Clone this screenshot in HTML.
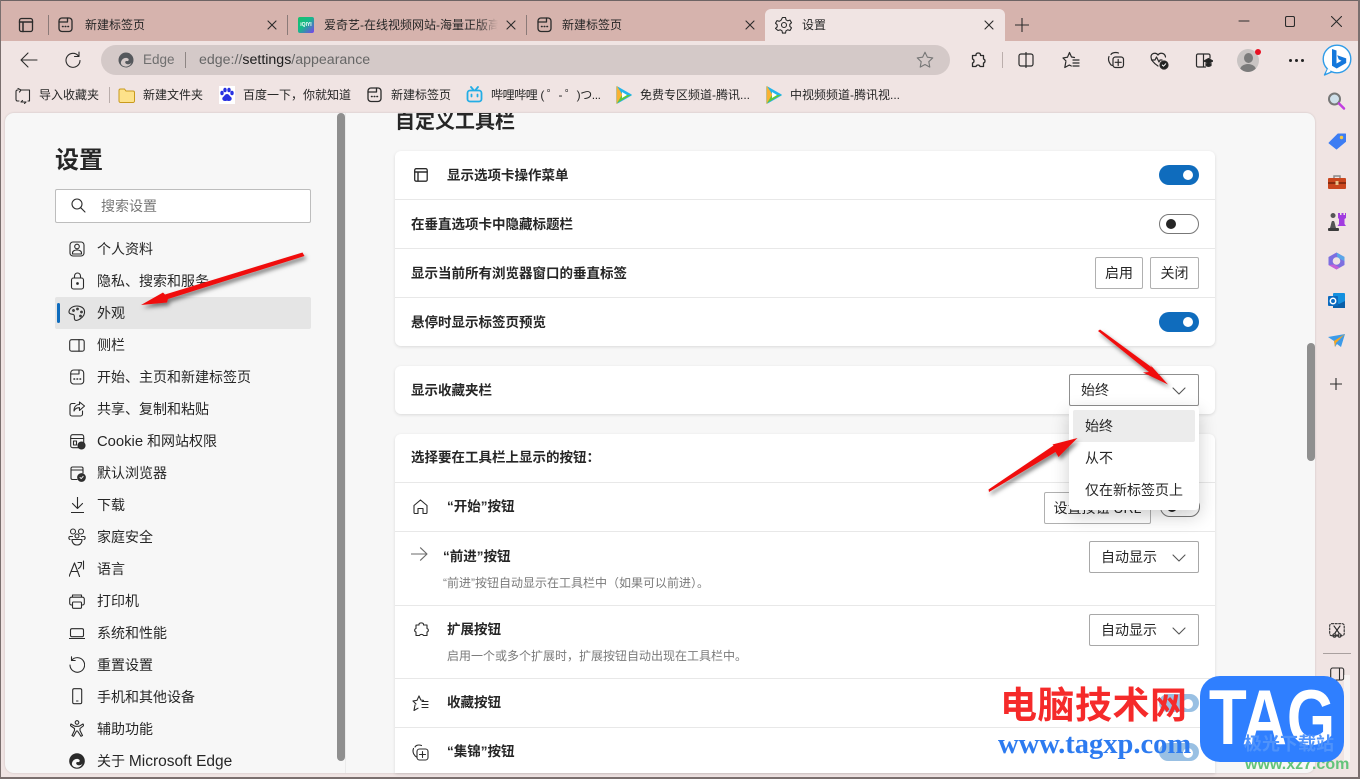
<!DOCTYPE html>
<html lang="zh-CN"><head><meta charset="utf-8"><title>设置</title>
<style>
*{box-sizing:border-box}
html,body{margin:0;padding:0;width:1360px;height:779px;overflow:hidden;background:#f0e4e3}
body{position:relative;font-family:"Liberation Sans","Noto Sans CJK SC",sans-serif;color:#262626;font-size:14px}
.a,.t,svg{position:absolute}
.t{white-space:nowrap;line-height:20px;height:20px}
.s{font-size:12px;line-height:16px;height:16px}
.b{font-weight:700;margin-top:1px}
svg.i{fill:none;stroke:#2b2b2b;stroke-width:1.1;stroke-linecap:round;stroke-linejoin:round}
.card{position:absolute;left:395px;width:820px;background:#fff;border-radius:6px;box-shadow:0 1px 3px rgba(0,0,0,.12)}
.ln{position:absolute;left:395px;width:820px;height:1px;background:#e8e8e8}
.btn{position:absolute;background:#fff;border:1px solid #b0b0b0;border-radius:2px;text-align:center;line-height:31px}
.sel{position:absolute;background:#fff;border:1px solid #a8a8a8;border-radius:2px;line-height:31px;padding-left:11px}
.sel svg{right:12px;top:12px}
.tog{position:absolute;width:40px;height:20px;border-radius:10px;background:#0f6cbd}
.tog:after{content:"";position:absolute;left:24px;top:5px;width:10px;height:10px;border-radius:50%;background:#fff}
.off{background:#fff;border:1px solid #777}
.off:after{left:6px;top:4px;background:#262626}
</style></head><body>
<!-- title bar -->
<div class="a" style="left:0;top:0;width:1360px;height:41px;background:#d6b3ad"></div>
<div class="a" style="left:0;top:0;width:1360px;height:1px;background:#6e6464"></div>
<div class="a" style="left:765px;top:9px;width:240px;height:32px;background:#f0e4e3;border-radius:6px 6px 0 0"></div>
<svg class="i" style="left:18px;top:17px;stroke-width:1.300" width="16" height="16"><rect x="1.500" y="1.500" width="13" height="13" rx="2"/><path d="M1.500 5h13M5 5v9.500" stroke-width="1.500"/></svg>
<div class="a" style="left:48px;top:15px;width:1px;height:20px;background:#8b7a78"></div>
<div class="a" style="left:287px;top:15px;width:1px;height:20px;background:#8b7a78"></div>
<div class="a" style="left:526px;top:15px;width:1px;height:20px;background:#8b7a78"></div>
<svg class="i" style="left:58px;top:17px;stroke-width:1.300" width="16" height="16"><rect x="1" y="1" width="13" height="13.500" rx="3"/><path d="M1 5h8.500V1"/><path d="M4.500 9.500h.6M7.200 9.500h.6M9.900 9.500h.6" stroke-width="1.500"/></svg>
<div class="t s" style="left:85px;top:17px">新建标签页</div>
<svg class="i" style="left:267px;top:20px" width="10" height="10"><path d="M1 1l8 8M9 1l-8 8"/></svg>
<div class="a" style="left:298px;top:17px;width:16px;height:16px;border-radius:2px;background:linear-gradient(135deg,#18c06a 0%,#16b98a 45%,#7a3ff0 100%);color:#fff;font-size:5px;font-weight:700;line-height:16px;text-align:center">iQIYI</div>
<div class="t s" style="left:324px;top:17px;width:174px;overflow:hidden;-webkit-mask-image:linear-gradient(90deg,#000 88%,transparent)">爱奇艺-在线视频网站-海量正版高清</div>
<svg class="i" style="left:506px;top:20px" width="10" height="10"><path d="M1 1l8 8M9 1l-8 8"/></svg>
<svg class="i" style="left:537px;top:17px;stroke-width:1.300" width="16" height="16"><rect x="1" y="1" width="13" height="13.500" rx="3"/><path d="M1 5h8.500V1"/><path d="M4.500 9.500h.6M7.200 9.500h.6M9.900 9.500h.6" stroke-width="1.500"/></svg>
<div class="t s" style="left:562px;top:17px">新建标签页</div>
<svg class="i" style="left:745px;top:20px" width="10" height="10"><path d="M1 1l8 8M9 1l-8 8"/></svg>
<svg class="i" style="left:775px;top:16px" width="18" height="18"><circle cx="9" cy="9" r="2.500"/><path d="M7.500 1.500h3l.5 2.300 1.700 1 2.300-.7 1.500 2.600-1.700 1.600v2l1.700 1.600-1.500 2.600-2.300-.7-1.700 1-.5 2.300h-3l-.5-2.300-1.700-1-2.300.7L.5 12.400l1.700-1.600v-2L.5 7.200 2 4.600l2.300.7 1.700-1z"/></svg>
<div class="t s" style="left:802px;top:17px">设置</div>
<svg class="i" style="left:984px;top:20px" width="10" height="10"><path d="M1 1l8 8M9 1l-8 8"/></svg>
<svg class="i" style="left:1015px;top:18px" width="14" height="14"><path d="M7 0v14M0 7h14"/></svg>
<svg class="i" style="left:1238px;top:16px" width="12" height="10"><path d="M1 5h10"/></svg>
<svg class="i" style="left:1285px;top:16px" width="10" height="11"><rect x=".5" y=".5" width="9" height="10" rx="1.500"/></svg>
<svg class="i" style="left:1331px;top:16px" width="11" height="11"><path d="M.5.5l10 10M10.500.5l-10 10"/></svg>
<!-- toolbar -->
<svg class="i" style="left:20px;top:51px" width="18" height="18"><path d="M17 9H1M8 2L1 9l7 7"/></svg>
<svg class="i" style="left:64px;top:51px" width="18" height="18"><path d="M14.500 5A7 7 0 1 0 16 9.500M15 1v4.500h-4.500"/></svg>
<div class="a" style="left:101px;top:45px;width:849px;height:30px;border-radius:15px;background:#d4c9c8"></div>
<svg style="left:118px;top:52px" width="16" height="16" viewBox="0 0 16 16"><circle cx="8" cy="8" r="7.500" fill="#55585c"/><path d="M3 10c1-4 5-5 7-3.500 1.500 1 .5 3-1.500 2.500-1.500 0-2 2 0 3 2 .8 4 0 5-1.500-1 3-4 4.500-6.500 4-3-.5-4.500-2.500-4-4.500z" fill="#d4c9c8"/></svg>
<div class="t" style="left:143px;top:50px;color:#6f6f6f;font-size:13.500px">Edge</div>
<div class="a" style="left:185px;top:52px;width:1px;height:16px;background:#8e8684"></div>
<div class="t" style="left:199px;top:50px;color:#666;font-size:14.200px">edge://<span style="color:#1c1c1c">settings</span>/appearance</div>
<svg class="i" style="left:916px;top:51px;stroke:#777" width="18" height="18"><path d="M9 1.200l2.400 5 5.400.7-4 3.800 1 5.400L9 13.500l-4.800 2.600 1-5.400-4-3.800 5.400-.7z"/></svg>
<svg class="i" style="left:970px;top:52px;stroke-width:1.300" width="17" height="17"><path d="M6 2.500C6.500.5 10 .5 10.500 2.500v1h3v3.500c2 .5 2 3.500 0 4v3.500H10c-.5-2-3.500-2-4 0H2.500V11c2-.5 2-3.500 0-4V3.500H6z"/></svg>
<div class="a" style="left:1002px;top:52px;width:1px;height:16px;background:#bbaeac"></div>
<svg class="i" style="left:1018px;top:52px;stroke-width:1.200" width="16" height="16"><rect x="1" y="2" width="14" height="12" rx="2"/><path d="M8 .5v15"/></svg>
<svg class="i" style="left:1062px;top:51px;stroke-width:1.200" width="18" height="18"><path d="M7.500 1.500l2 4.500 3 .5M1 7l4.500-.8M3.800 11L2.800 16.500l4.500-2.500 2 1M1 7l3 3M7.500 1.500L5.500 6.200"/><path d="M11 9h6M11 12h6M11 15h6"/></svg>
<svg class="i" style="left:1107px;top:51px;stroke-width:1.200" width="18" height="18"><path d="M4 3.500C5 1.500 9 1 11.500 2M2 5.500c-1 2-.500 5 1 7 .5 1 1.500 2 2.500 2"/><rect x="6" y="6" width="10.500" height="10.500" rx="2.500"/><path d="M11.200 8.500v6M8.200 11.300h6"/></svg>
<svg class="i" style="left:1150px;top:51px;stroke-width:1.200" width="19" height="19"><path d="M8 15C5 13 1 10 1 6c0-4 5-5 7-2 2-3 7-2 7.500 2M1.500 9H5l1.500-3L9 11l1-2h2"/><circle cx="14" cy="14" r="4" fill="#222"/><path d="M12.300 14l1.200 1.200 2.200-2.400" stroke="#fff" stroke-width="1"/></svg>
<svg class="i" style="left:1195px;top:51px;stroke-width:1.200" width="18" height="18"><path d="M8.500 3H3a1.500 1.500 0 0 0-1.500 1.500v10A1.500 1.500 0 0 0 3 16h5.500zM8.500 3h5A1.500 1.500 0 0 1 15 4.500V7M8.500 16h2"/><path d="M9 10l4.500-2.500L18 10l-4.500 2.500z" fill="#222"/><path d="M11 12.500v2c1.500 1 3.500 1 5 0v-2" fill="#222"/></svg>
<div class="a" style="left:1237px;top:49px;width:22px;height:23px;border-radius:50%;background:#c9c4c3;overflow:hidden"><div class="a" style="left:7px;top:4px;width:9px;height:10px;border-radius:50%;background:#7b7b7b"></div><div class="a" style="left:3px;top:15px;width:16px;height:12px;border-radius:50%;background:#7b7b7b"></div></div>
<div class="a" style="left:1255px;top:49px;width:6px;height:6px;border-radius:50%;background:#e81123"></div>
<div class="a" style="left:1289px;top:59px;width:3px;height:3px;border-radius:50%;background:#222;box-shadow:6px 0 #222,12px 0 #222"></div>
<!-- bing -->
<svg style="left:1322px;top:44px" width="30" height="33" viewBox="0 0 30 33"><path d="M6 24L2.500 31l8-3.500z" fill="#fff" stroke="#2f9ce8" stroke-width="1.400" stroke-linejoin="round"/><circle cx="15" cy="15" r="13.800" fill="#fff" stroke="#2f9ce8" stroke-width="1.400"/><path d="M6 24.500L4 29l5-2z" fill="#fff"/><path d="M10 5l4.500 1.500v13l5-2.800-2.800-1.300-1.500-4.200 9 3.200v4.600l-9.500 5.500-4.700-2.700z" fill="#1478dc"/></svg>
<!-- bookmarks -->
<svg class="i" style="left:15px;top:87px;stroke-width:1.100" width="16" height="17"><path d="M3 3h-.5A1.500 1.500 0 0 0 1 4.500v8A1.500 1.500 0 0 0 2.500 14H4M6 3h8.500v11H13M3 1.500L6 3 4.500 5M6 15h5M6 15l1.500-1.500M11 15l-1.500 1.500"/></svg>
<div class="t s" style="left:39px;top:87px">导入收藏夹</div>
<div class="a" style="left:109px;top:87px;width:1px;height:16px;background:#b9adab"></div>
<svg style="left:118px;top:87px" width="17" height="16"><path d="M1 3.500A1.500 1.500 0 0 1 2.500 2h4l1.500 2h7A1.500 1.500 0 0 1 16.500 5.500v8.500A1.500 1.500 0 0 1 15 15.500H2.500A1.500 1.500 0 0 1 1 14z" fill="#fde28a" stroke="#c99a1d"/></svg>
<div class="t s" style="left:143px;top:87px">新建文件夹</div>
<div class="a" style="left:219px;top:86px;width:16px;height:18px;background:#fff"></div>
<svg style="left:219px;top:87px" width="16" height="16" viewBox="0 0 16 16" fill="#2932e1"><ellipse cx="3" cy="6" rx="1.700" ry="2.300"/><ellipse cx="6" cy="3" rx="1.700" ry="2.300"/><ellipse cx="10" cy="3" rx="1.700" ry="2.300"/><ellipse cx="13" cy="6" rx="1.700" ry="2.300"/><path d="M8 7c-2 0-2.500 2-4 3-1.500 1.500-.5 4 2 4 1 0 1.500-.3 2-.3s1 .3 2 .3c2.500 0 3.500-2.500 2-4-1.500-1-2-3-4-3z"/></svg>
<div class="t s" style="left:243px;top:87px">百度一下，你就知道</div>
<svg class="i" style="left:367px;top:87px;stroke-width:1.300" width="16" height="16"><rect x="1" y="1" width="13" height="13.500" rx="3"/><path d="M1 5h8.500V1"/><path d="M4.500 9.500h.6M7.200 9.500h.6M9.900 9.500h.6" stroke-width="1.500"/></svg>
<div class="t s" style="left:391px;top:87px">新建标签页</div>
<svg class="i" style="left:466px;top:86px;stroke:#23ade5;stroke-width:1.800" width="17" height="17"><rect x="1.500" y="4.500" width="14" height="11" rx="2.500"/><path d="M5 1l2.500 3M12 1L9.500 4M5.500 8.500v2M11.500 8.500v2"/></svg>
<div class="t s" style="left:491px;top:87px;letter-spacing:-.4px">哔哩哔哩 ( ゜- ゜)つ...</div>
<svg style="left:615px;top:86px" width="17" height="18" viewBox="0 0 17 18"><path d="M2 1l14 8-14 8z" fill="#23b4ea" stroke="#23b4ea" stroke-width="1.500" stroke-linejoin="round"/><path d="M2 1l5 8-5 8z" fill="#f9b233" stroke="#f9b233"/><path d="M2 17l14-8-9 0z" fill="#5fc83c"/><path d="M7 6l5 3-5 3z" fill="#fff"/></svg>
<div class="t s" style="left:640px;top:87px">免费专区频道-腾讯...</div>
<svg style="left:765px;top:86px" width="17" height="18" viewBox="0 0 17 18"><path d="M2 1l14 8-14 8z" fill="#23b4ea" stroke="#23b4ea" stroke-width="1.500" stroke-linejoin="round"/><path d="M2 1l5 8-5 8z" fill="#f9b233" stroke="#f9b233"/><path d="M2 17l14-8-9 0z" fill="#5fc83c"/><path d="M7 6l5 3-5 3z" fill="#fff"/></svg>
<div class="t s" style="left:790px;top:87px">中视频频道-腾讯视...</div>
<!-- right sidebar -->
<svg style="left:1327px;top:91px" width="19" height="20"><circle cx="7.500" cy="8" r="5.500" fill="#cfe0ea" stroke="#777" stroke-width="2"/><path d="M12 12.500l5 5" stroke="#c23ee0" stroke-width="2.500" stroke-linecap="round"/></svg>
<svg style="left:1328px;top:132px" width="19" height="18"><path d="M1 11L10 2h7.500v7.500L8.500 17z" fill="#3d7df3" stroke="#3d7df3" stroke-linejoin="round"/><circle cx="13.500" cy="5.500" r="1.700" fill="#f5c842"/></svg>
<svg style="left:1328px;top:174px" width="18" height="16"><path d="M6 4V2h6v2" fill="none" stroke="#8a8a8a" stroke-width="1.500"/><rect x="0" y="4" width="18" height="11" rx="1" fill="#c9461e"/><rect x="0" y="8" width="18" height="2" fill="#8a2b0f"/><rect x="7.500" y="7" width="3" height="4" fill="#e9c18a"/></svg>
<svg style="left:1328px;top:212px" width="18" height="20"><path d="M5 6a2.500 2.500 0 1 1 .1 0M2 16c1-3 1-5 2-7h2c1 2 1 4 2 7z" fill="#555"/><rect x="0" y="16" width="11" height="3" rx="1" fill="#3c3c3c"/><path d="M10 1h2v2h1.500V1h2v2H17V1h1v5l-1.500 1v5l1.500 2H9.500l1.500-2V7L10 6z" fill="#a23ce0"/></svg>
<svg style="left:1328px;top:252px" width="17" height="18" viewBox="0 0 17 18"><path d="M8.500 .5L16.500 5v8l-8 4.500L.5 13V5z" fill="#7d6fe0"/><path d="M8.500 .5L16.500 5v4l-7-3z" fill="#5aa6e8"/><path d="M.5 13l8 4.500 3-2-5.500-3z" fill="#c562d8"/><circle cx="8.500" cy="9" r="3.800" fill="#f0e4e3"/></svg>
<svg style="left:1328px;top:292px" width="17" height="17"><rect x="5" y="1" width="12" height="15" rx="1" fill="#1490df"/><path d="M5 9l6 3 6-3v7H5z" fill="#0a5fa8"/><rect x="0" y="4" width="10" height="10" rx="1" fill="#0b6abf"/><circle cx="5" cy="9" r="2.700" fill="none" stroke="#fff" stroke-width="1.500"/></svg>
<svg style="left:1328px;top:334px" width="17" height="14"><path d="M0 3L17 0l-4 13-4-3-2 3-1-6z" fill="#3d9be9"/><path d="M0 3l6 4 11-7-9 9-1 4-1-6z" fill="#f5a623"/></svg>
<svg class="i" style="left:1330px;top:378px" width="12" height="12"><path d="M6 0v12M0 6h12"/></svg>
<svg class="i" style="left:1329px;top:623px" width="16" height="16"><rect x=".7" y=".7" width="14.500" height="12" rx="2" stroke-dasharray="2 1.500"/><path d="M5 3l5 7M11 3L6 10"/><circle cx="5.500" cy="12.500" r="1.700"/><circle cx="10.500" cy="12.500" r="1.700"/></svg>
<div class="a" style="left:1323px;top:653px;width:28px;height:1px;background:#a9a09f"></div>
<svg class="i" style="left:1330px;top:666px" width="15" height="15"><rect x=".7" y="2" width="13" height="12" rx="2"/><path d="M9.500 2v12"/></svg>
<!-- content -->
<div class="a" style="left:5px;top:113px;width:1310px;height:660px;background:#f7f7f7;border-radius:9px;overflow:hidden;box-shadow:0 0 2px rgba(0,0,0,.15)">
<div class="a b" style="left:390px;top:-5px;font-size:20px;line-height:26px;white-space:nowrap">自定义工具栏</div>
</div>
<div class="a" style="left:345px;top:113px;width:1px;height:660px;background:#ebebeb"></div>
<div class="a" style="left:337px;top:113px;width:8px;height:648px;border-radius:4px;background:#8f8f8f"></div>
<div class="a" style="left:1307px;top:343px;width:8px;height:118px;border-radius:4px;background:#8f8f8f"></div>
<div class="t b" style="left:55px;top:145px;font-size:24px;line-height:30px;height:30px">设置</div>
<div class="a" style="left:55px;top:189px;width:256px;height:34px;background:#fff;border:1px solid #bdbdbd;border-radius:2px"></div>
<svg class="i" style="left:71px;top:198px" width="15" height="15"><circle cx="6" cy="6" r="5"/><path d="M9.700 9.700l4.300 4.300"/></svg>
<div class="t" style="left:101px;top:196px;color:#777;font-size:14px">搜索设置</div>
<div class="a" style="left:55px;top:297px;width:256px;height:32px;background:#e5e5e5;border-radius:2px"></div>
<div class="a" style="left:57px;top:303px;width:3px;height:20px;background:#0f6cbd;border-radius:2px"></div>
<!-- nav -->
<svg class="i" style="left:69px;top:241px" width="16" height="16"><rect x="1" y="1" width="14" height="14" rx="3"/><circle cx="8" cy="5.500" r="2.300"/><path d="M3.500 12c0-4 9-4 9 0v1h-9z"/></svg>
<div class="t" style="left:97px;top:239px">个人资料</div>
<svg class="i" style="left:70px;top:272px" width="15" height="18"><rect x="1.500" y="6" width="12" height="11" rx="2"/><path d="M4.500 6V4a3 3 0 0 1 6 0v2"/><circle cx="7.500" cy="11.500" r=".8" fill="#222"/></svg>
<div class="t" style="left:97px;top:271px">隐私、搜索和服务</div>
<svg class="i" style="left:68px;top:304px" width="18" height="18"><path d="M9 2c-5 0-8 3-8 6 0 3 4 1.500 5 3 1 1.500-.5 3 1 5 1 1 3.500 0 5-1 3-2 5-5 4.500-8C16 4 13 2 9 2z"/><circle cx="5.500" cy="6.500" r=".8"/><circle cx="9.500" cy="5" r=".8"/><circle cx="13.500" cy="8" r=".8"/><circle cx="12.500" cy="12" r=".8"/></svg>
<div class="t" style="left:97px;top:303px">外观</div>
<svg class="i" style="left:69px;top:339px" width="16" height="13"><rect x=".7" y=".7" width="14.500" height="11.500" rx="2"/><path d="M10 .7v11.500"/></svg>
<div class="t" style="left:97px;top:335px">侧栏</div>
<svg class="i" style="left:70px;top:369px" width="15" height="16"><rect x=".7" y="1" width="13" height="14" rx="3"/><path d="M.7 5h8.300V1"/><path d="M4 10h.6M7 10h.6M10 10h.6" stroke-width="1.500"/></svg>
<div class="t" style="left:97px;top:367px">开始、主页和新建标签页</div>
<svg class="i" style="left:69px;top:401px" width="16" height="16"><path d="M6 2.500H3A2 2 0 0 0 1 4.500v8.500a2 2 0 0 0 2 2h8.500a2 2 0 0 0 2-2V10"/><path d="M15.500 5L10.500 1v2.500C7 3.500 5 6 5 10c1-2.500 3-3.300 5.500-3.300V9.500z"/></svg>
<div class="t" style="left:97px;top:399px">共享、复制和粘贴</div>
<svg class="i" style="left:70px;top:434px" width="16" height="16"><rect x=".7" y=".7" width="13" height="13" rx="2"/><path d="M.7 4.500h13M3.500 7v4h3V7z"/><circle cx="11.500" cy="11.500" r="3.500" fill="#333"/></svg>
<div class="t" style="left:97px;top:431px"><span style="font-size:14.800px">Cookie</span> 和网站权限</div>
<svg class="i" style="left:70px;top:466px" width="16" height="16"><path d="M7 13.500H2.500A1.500 1.500 0 0 1 1 12V2.500A1.500 1.500 0 0 1 2.500 1h9A1.500 1.500 0 0 1 13 2.500V7M1 4h12"/><circle cx="11.500" cy="11.500" r="3.800" fill="#333"/><path d="M10 11.500l1.200 1.100 1.900-2.200" stroke="#fff" stroke-width=".9"/></svg>
<div class="t" style="left:97px;top:463px">默认浏览器</div>
<svg class="i" style="left:71px;top:497px" width="13" height="16"><path d="M6.500 0v11.500M1.500 6.500l5 5 5-5M0 15.500h13"/></svg>
<div class="t" style="left:97px;top:495px">下载</div>
<svg class="i" style="left:68px;top:528px" width="18" height="18"><circle cx="5" cy="3.500" r="2.500"/><circle cx="13" cy="3.500" r="2.500"/><circle cx="9" cy="8" r="2"/><path d="M4.500 8.500H2C.5 8.500.5 11 2 11.500M13.500 8.500H16c1.500 0 1.500 2.500 0 3M4 11.500h10c0 3.500-2 5.500-5 5.500s-5-2-5-5.500z"/></svg>
<div class="t" style="left:97px;top:527px">家庭安全</div>
<svg class="i" style="left:69px;top:560px" width="16" height="17"><path d="M0 16.500L5.500 3l5 13.500M2 11.500h7M9 2.500h3.500c0 3-1 5-3 6M14.500 1v8"/></svg>
<div class="t" style="left:97px;top:559px">语言</div>
<svg class="i" style="left:69px;top:594px" width="16" height="15"><path d="M3.500 11H2.500A1.800 1.800 0 0 1 .7 9.200V5A1.800 1.800 0 0 1 2.500 3.200h11A1.800 1.800 0 0 1 15.300 5v4.200A1.800 1.800 0 0 1 13.500 11h-1M3.500 3V1h9v2"/><rect x="3.500" y="8" width="9" height="6.300" rx="1"/></svg>
<div class="t" style="left:97px;top:591px">打印机</div>
<svg class="i" style="left:69px;top:628px" width="16" height="11"><rect x="1.500" y=".7" width="13" height="8" rx="1.500"/><path d="M0 10.500h16"/></svg>
<div class="t" style="left:97px;top:623px">系统和性能</div>
<svg class="i" style="left:69px;top:656px" width="16" height="17"><path d="M2.500 4.500A7.300 7.300 0 1 1 1 9M2.500 .8v3.700h3.700"/></svg>
<div class="t" style="left:97px;top:655px">重置设置</div>
<svg class="i" style="left:72px;top:688px" width="11" height="17"><rect x=".7" y=".7" width="9" height="15" rx="1.500"/><path d="M4.500 13h1.500"/></svg>
<div class="t" style="left:97px;top:687px">手机和其他设备</div>
<svg class="i" style="left:70px;top:720px" width="14" height="17"><circle cx="7" cy="2.500" r="1.800"/><path d="M1 4l4 2.300h4L13 4l.8 1.500-3.800 3v2l2.500 5-1.500.8L7.500 11h-1l-3 5.300-1.500-.8 2.500-5v-2L.2 5.500z"/></svg>
<div class="t" style="left:97px;top:719px">辅助功能</div>
<svg style="left:69px;top:753px" width="16" height="16" viewBox="0 0 16 16"><circle cx="8" cy="8" r="7.800" fill="#2a2a2a"/><path d="M3 10c1-4 5-5 7-3.500 1.500 1 .5 3-1.500 2.500-1.500 0-2 2 0 3 2 .8 4 0 5-1.500-1 3-4 4.500-6.500 4-3-.5-4.500-2.500-4-4.500z" fill="#f7f7f7"/></svg>
<div class="t" style="left:97px;top:751px">关于 <span style="font-size:15.500px">Microsoft Edge</span></div>
<!-- cards -->
<div class="card" style="top:151px;height:195px"></div>
<div class="ln" style="top:199px"></div><div class="ln" style="top:248px"></div><div class="ln" style="top:297px"></div>
<svg class="i" style="left:414px;top:168px;stroke-width:1.300" width="14" height="14"><rect x=".7" y=".7" width="12.500" height="12.500" rx="1.500"/><path d="M.7 4h12.500M4 4v9" stroke-width="1.400"/></svg>
<div class="t b" style="left:447px;top:165px;font-size:13.500px">显示选项卡操作菜单</div>
<div class="tog" style="left:1159px;top:165px"></div>
<div class="t b" style="left:411px;top:214px;font-size:13.500px">在垂直选项卡中隐藏标题栏</div>
<div class="tog off" style="left:1159px;top:214px"></div>
<div class="t b" style="left:411px;top:263px;font-size:13.500px">显示当前所有浏览器窗口的垂直标签</div>
<div class="btn" style="left:1095px;top:257px;width:48px;height:32px">启用</div>
<div class="btn" style="left:1150px;top:257px;width:49px;height:32px">关闭</div>
<div class="t b" style="left:411px;top:312px;font-size:13.500px">悬停时显示标签页预览</div>
<div class="tog" style="left:1159px;top:312px"></div>
<div class="card" style="top:366px;height:48px"></div>
<div class="t b" style="left:411px;top:380px;font-size:13.500px">显示收藏夹栏</div>
<div class="sel" style="left:1069px;top:374px;width:130px;height:32px;border-color:#8f8f8f">始终<svg class="i" style="stroke:#555" width="14" height="8"><path d="M1 1l6 6 6-6"/></svg></div>
<div class="card" style="top:434px;border-radius:6px 6px 0 0;height:339px"></div>
<div class="ln" style="top:482px"></div><div class="ln" style="top:531px"></div><div class="ln" style="top:605px"></div><div class="ln" style="top:678px"></div><div class="ln" style="top:727px"></div>
<div class="t b" style="left:411px;top:447px;font-size:13.500px">选择要在工具栏上显示的按钮：</div>
<svg class="i" style="left:413px;top:499px;stroke-width:1.100" width="15" height="15"><path d="M1 13.500V6.500L7.500 1 14 6.500v7a1 1 0 0 1-1 1h-3V9.500H5v5H2a1 1 0 0 1-1-1z"/></svg>
<div class="t b" style="left:447px;top:496px;font-size:13.500px">“开始”按钮</div>
<div class="btn" style="left:1044px;top:492px;width:107px;height:32px">设置按钮 URL</div>
<div class="tog off" style="left:1160px;top:497px"></div>
<svg class="i" style="left:411px;top:547px;stroke:#6a6a6a" width="17" height="14"><path d="M0 7h16M9.500 .8L16 7l-6.500 6.200"/></svg>
<div class="t b" style="left:443px;top:546px;font-size:13.500px">“前进”按钮</div>
<div class="t s" style="left:443px;top:575px;color:#7a7a7a">“前进”按钮自动显示在工具栏中（如果可以前进）。</div>
<div class="sel" style="left:1089px;top:541px;width:110px;height:32px">自动显示<svg class="i" style="stroke:#555" width="14" height="8"><path d="M1 1l6 6 6-6"/></svg></div>
<svg class="i" style="left:414px;top:622px;stroke-width:1.100" width="15" height="16"><path d="M5 2C5.500.5 9 .5 9.500 2v1H13v3.500c1.800.5 1.800 3 0 3.500V13.500H9.500c-.5-1.500-3.500-1.500-4 0H2V10c-1.800-.5-1.800-3 0-3.500V3h3z"/></svg>
<div class="t b" style="left:447px;top:619px;font-size:13.500px">扩展按钮</div>
<div class="t s" style="left:447px;top:648px;color:#7a7a7a">启用一个或多个扩展时，扩展按钮自动出现在工具栏中。</div>
<div class="sel" style="left:1089px;top:614px;width:110px;height:32px">自动显示<svg class="i" style="stroke:#555" width="14" height="8"><path d="M1 1l6 6 6-6"/></svg></div>
<svg class="i" style="left:412px;top:695px" width="18" height="16"><path d="M7 1l1.800 4 2.700.4M1 6l4-.7L7 1M3 10l-1 5.500 4-2.300M1 6l3 3"/><path d="M10 6.500h6M10 9.500h6M10 12.500h6"/></svg>
<div class="t b" style="left:447px;top:692px;font-size:13.500px">收藏按钮</div>
<div class="tog" style="left:1159px;top:694px;opacity:.42;height:18px"></div>
<svg class="i" style="left:412px;top:744px" width="18" height="17"><path d="M3 3c1-2 4-2.500 6.500-1.500M1.500 4.500c-1 2-.5 5 1 6.500.5 1 1 1.500 2 2"/><rect x="5" y="5" width="11" height="11" rx="2.500"/><path d="M10.500 7.500v6M7.500 10.500h6"/></svg>
<div class="t b" style="left:447px;top:741px;font-size:13.500px">“集锦”按钮</div>
<div class="tog" style="left:1159px;top:743px;opacity:.42;height:18px"></div>
<!-- dropdown -->
<div class="a" style="left:1069px;top:406px;width:130px;height:104px;background:#fff;border-radius:4px;box-shadow:0 6px 18px rgba(0,0,0,.2)"></div>
<div class="a" style="left:1073px;top:410px;width:122px;height:32px;background:#ececec;border-radius:2px"></div>
<div class="t" style="left:1085px;top:416px">始终</div>
<div class="t" style="left:1085px;top:448px">从不</div>
<div class="t" style="left:1085px;top:480px">仅在新标签页上</div>
<!-- arrows -->
<svg style="left:0;top:0;overflow:visible" width="1360" height="779">
<defs><filter id="sh" x="-20%" y="-20%" width="140%" height="140%"><feDropShadow dx="2" dy="3" stdDeviation="2" flood-color="#000" flood-opacity=".5"/></filter></defs>
<g fill="#f01010" filter="url(#sh)">
<path d="M302.500 252.500L304.500 256 168 299 167 302.500 141 305 163 292.500 165 294.500z"/>
<path d="M1098 331l2-1.500 52 38-2-3 18 20-25-12 6-.5-51-41z"/>
<path d="M989 492l-.5-2.500 65-44-1-1 25-6.500-19 19-3-5z"/>
</g></svg>
<!-- bottom border -->
<div class="a" style="left:0;top:777px;width:1360px;height:2px;background:#7a6f6e"></div>
<div class="a" style="left:0;top:0;width:1px;height:779px;background:#7a6f6e"></div>
<div class="a" style="left:1358px;top:0;width:2px;height:779px;background:#7a6f6e"></div>
<!-- watermark -->
<div class="a" style="left:1344px;top:675px;width:6px;height:87px;background:rgba(255,255,255,.55)"></div>
<div class="t" style="left:1000px;top:680px;height:44px;line-height:44px;font-size:37px;font-weight:700;color:#f52a2a;letter-spacing:.500px;font-family:'Noto Sans CJK SC',sans-serif">电脑技术网</div>
<div class="t" style="left:998px;top:730px;height:30px;line-height:30px;font-family:'Liberation Serif',serif;font-weight:700;font-size:28.500px;color:#2d7bf0">www.tagxp.com</div>
<div class="t" style="left:1245px;top:757px;height:16px;line-height:16px;font-size:16px;font-weight:700;color:#62c47a">www.xz7.com</div>
<div class="a" style="left:1200px;top:676px;width:144px;height:86px;border-radius:20px;background:#2f7fff"></div>
<div class="t" style="left:1200px;top:677px;width:144px;height:84px;line-height:84px;font-size:62px;font-weight:700;color:#fff;text-align:center;transform:scale(1,1.25)">TAG</div>
<div class="t" style="left:1244px;top:732px;height:24px;line-height:24px;font-size:18px;font-weight:700;color:#4f93fb">极光下载站</div>
</body></html>
